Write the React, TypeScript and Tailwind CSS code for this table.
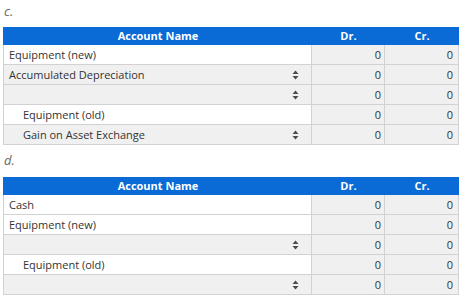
import React from 'react';

interface Row {
  name: string;
  indent?: boolean;
  select?: boolean;
}

const Arrows: React.FC = () => (
  <svg width="7" height="10" viewBox="0 0 7 10" className="shrink-0">
    <path d="M3.5 0.5 L6.5 4 L0.5 4 Z" fill="#4b4b4b" />
    <path d="M3.5 9.5 L6.5 6 L0.5 6 Z" fill="#4b4b4b" />
  </svg>
);

const JournalTable: React.FC<{ rows: Row[] }> = ({ rows }) => (
  <div className="ml-[3px] w-[456px] text-[11px] text-[#333]">
    <div className="grid grid-cols-[309px_73px_74px] h-[18px] bg-[#0a6ad6] font-bold text-white leading-[18px]">
      <div className="text-center pl-[1px]">Account Name</div>
      <div className="text-center">Dr.</div>
      <div className="text-center">Cr.</div>
    </div>
    {rows.map((r, i) => (
      <div key={i} className="grid grid-cols-[309px_73px_74px] h-[20px] leading-[19px]">
        <div
          className={
            'flex items-center justify-between border-b border-r border-l border-[#d2d2d2] pr-[12px] ' +
            (r.select ? 'bg-[#f0f0f0]' : 'bg-white') +
            (r.indent ? ' pl-[19px]' : ' pl-[5px]')
          }
        >
          <span>{r.name}</span>
          {r.select && <Arrows />}
        </div>
        <div className="bg-[#f0f0f0] border-b border-r border-[#d2d2d2] text-right pr-[3px]">0</div>
        <div className="bg-[#f0f0f0] border-b border-r border-[#d2d2d2] text-right pr-[5px]">0</div>
      </div>
    ))}
  </div>
);

const tableC: Row[] = [
  { name: 'Equipment (new)' },
  { name: 'Accumulated Depreciation', select: true },
  { name: '', select: true },
  { name: 'Equipment (old)', indent: true },
  { name: 'Gain on Asset Exchange', indent: true, select: true },
];

const tableD: Row[] = [
  { name: 'Cash' },
  { name: 'Equipment (new)' },
  { name: '', select: true },
  { name: 'Equipment (old)', indent: true },
  { name: '', select: true },
];

export default function App() {
  return (
    <div className="w-[466px] h-[302px] bg-white overflow-hidden" style={{ fontFamily: '"Open Sans", sans-serif' }}>
      <div className="mt-[3px] mb-[8px] h-[16px] pl-[4px] text-[13px] leading-[16px] italic text-[#666]">c.</div>
      <JournalTable rows={tableC} />
      <div className="mt-[7px] mb-[9px] h-[16px] pl-[4px] text-[13px] leading-[16px] italic text-[#666]">d.</div>
      <JournalTable rows={tableD} />
    </div>
  );
}
